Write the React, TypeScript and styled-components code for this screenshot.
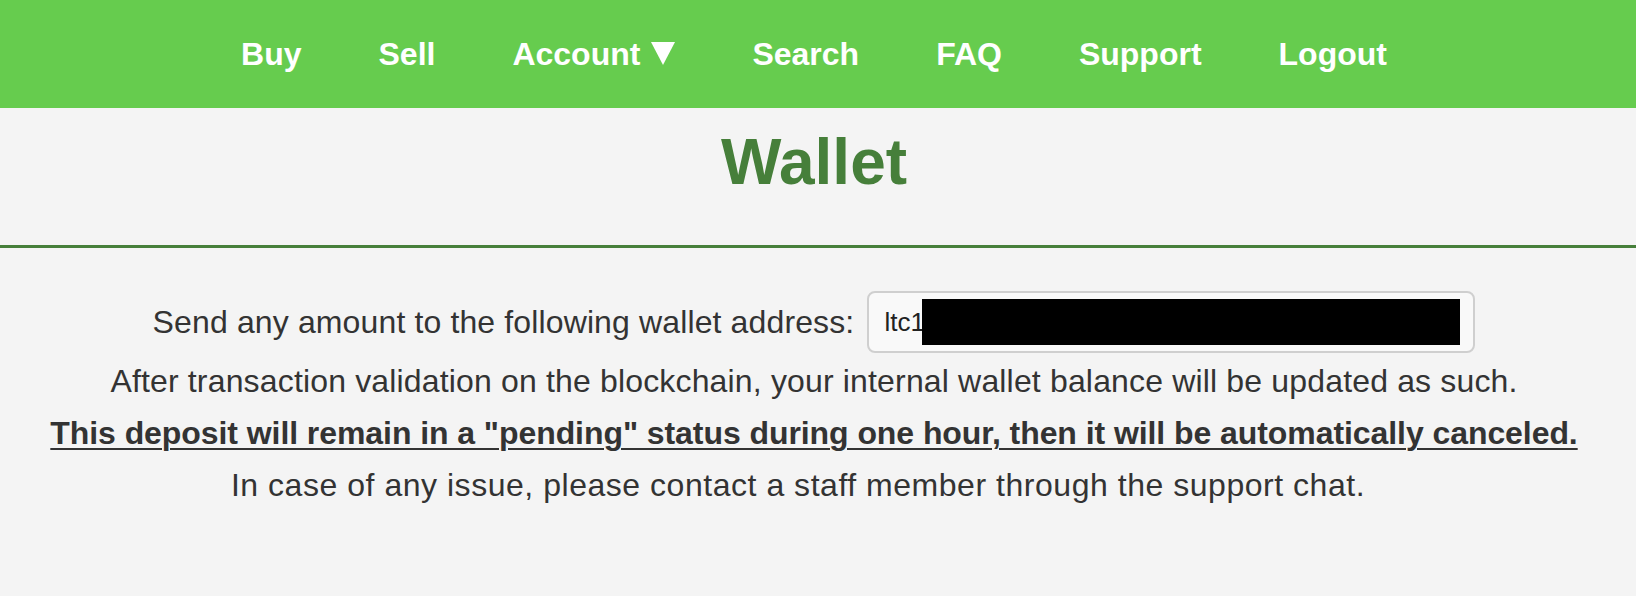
import React from "react";
import styled, { createGlobalStyle } from "styled-components";

const GlobalStyle = createGlobalStyle`
  body {
    margin: 0;
    background: #f4f4f4;
    font-family: "Liberation Sans", Arial, Helvetica, sans-serif;
    color: #333333;
  }
`;

const NavBar = styled.nav`
  height: 108px;
  background: #66cc4e;
  display: flex;
  justify-content: center;
  align-items: center;
  gap: 77px;
  padding-right: 8px;
`;

const NavItem = styled.a`
  display: inline-flex;
  align-items: baseline;
  color: #ffffff;
  font-size: 32px;
  font-weight: 700;
  text-decoration: none;
  cursor: pointer;
  white-space: nowrap;
`;

const Caret = styled.svg`
  width: 24px;
  height: 23px;
  margin-left: 11px;
  fill: #ffffff;
`;

const Header = styled.header`
  padding: 17px 8px 46px 0;
  border-bottom: 3px solid #467f3a;
  text-align: center;
`;

const Title = styled.h1`
  margin: 0;
  font-size: 64px;
  line-height: 74px;
  font-weight: 700;
  color: #467f3a;
`;

const Content = styled.main`
  padding: 43px 8px 0 0;
  display: flex;
  flex-direction: column;
  align-items: center;
`;

const AddressRow = styled.div`
  display: flex;
  align-items: center;
  gap: 13px;
  font-size: 32px;
  letter-spacing: 0.13px;
  margin-bottom: 2px;
`;

const AddressBox = styled.div`
  box-sizing: border-box;
  width: 608px;
  height: 62px;
  display: flex;
  align-items: center;
  padding-left: 15px;
  background: #f9f9f9;
  border: 2px solid #cfcfcf;
  border-radius: 8px;
  font-size: 26px;
  letter-spacing: 0;
  color: #222222;
`;

const Redacted = styled.span`
  display: inline-block;
  width: 538px;
  height: 46px;
  background: #000000;
  margin-left: -3px;
`;

const Line = styled.p<{ $strong?: boolean; $spacing?: number; $shift?: number }>`
  margin: 0;
  font-size: 32px;
  line-height: 52px;
  text-align: center;
  font-weight: ${(p) => (p.$strong ? 700 : 400)};
  letter-spacing: ${(p) => p.$spacing ?? 0}px;
  padding-right: ${(p) => p.$shift ?? 0}px;
  text-decoration: ${(p) => (p.$strong ? "underline" : "none")};
  text-underline-offset: 4px;
  text-decoration-thickness: 2px;
`;

const navItems = ["Buy", "Sell", "Account", "Search", "FAQ", "Support", "Logout"];

export default function App() {
  return (
    <>
      <GlobalStyle />
      <NavBar>
        {navItems.map((item) => (
          <NavItem key={item}>
            {item}
            {item === "Account" && (
              <Caret viewBox="0 0 24 23">
                <polygon points="0,0 24,0 12,23" />
              </Caret>
            )}
          </NavItem>
        ))}
      </NavBar>
      <Header>
        <Title>Wallet</Title>
      </Header>
      <Content>
        <AddressRow>
          <span>Send any amount to the following wallet address:</span>
          <AddressBox>
            ltc1
            <Redacted />
          </AddressBox>
        </AddressRow>
        <Line $spacing={0.16}>
          After transaction validation on the blockchain, your internal wallet balance will be updated as such.
        </Line>
        <Line $strong $spacing={-0.07}>
          This deposit will remain in a "pending" status during one hour, then it will be automatically canceled.
        </Line>
        <Line $spacing={0.53} $shift={32}>
          In case of any issue, please contact a staff member through the support chat.
        </Line>
      </Content>
    </>
  );
}
